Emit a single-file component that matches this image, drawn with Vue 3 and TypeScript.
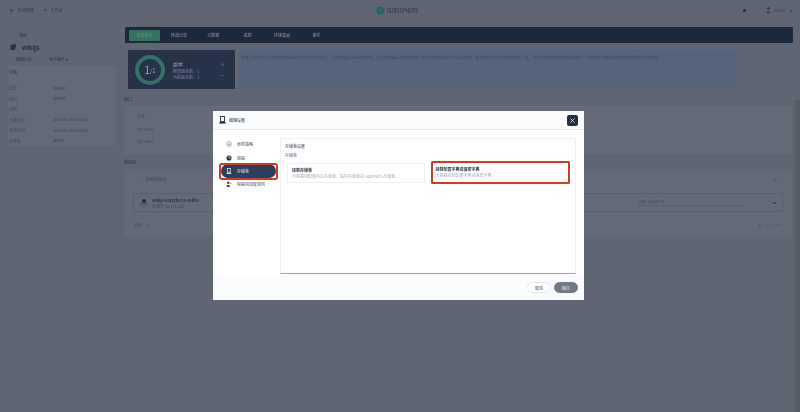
<script setup lang="ts">
const tabs: string[] = ['资源状态', '修改记录', '元数据', '监控', '环境变量', '事件']
const details: [string, string][] = [
  ['集群', 'default'],
  ['项目', 'default'],
  ['应用', '-'],
  ['创建时间', '2024-06-25 16:26:51'],
  ['更新时间', '2024-06-25 16:26:53'],
  ['创建者', 'admin'],
]
const navItems: { label: string; icon: string }[] = [
  { label: '更新策略', icon: 'update' },
  { label: '容器', icon: 'box' },
  { label: '存储卷', icon: 'disk' },
  { label: '容器组调度规则', icon: 'users' },
]
</script>

<template>
  <div class="page">
    <header class="topbar">
      <div class="top-left">
        <span class="top-link"><i class="ring"></i>平台管理</span>
        <span class="top-link second"><i class="dot"></i>工作台</span>
      </div>
      <div class="logo">
        <svg width="9" height="9" viewBox="0 0 12 12"><circle cx="6" cy="6" r="5.5" fill="#1a6b66" /><path d="M7.5 2.5 4.5 6l3 3.5" fill="none" stroke="#565c6a" stroke-width="1.6" /></svg>
        <span class="logo-word">KUBESPHERE</span>
      </div>
      <div class="top-right">
        <i class="bell"></i>
        <svg width="5" height="6" viewBox="0 0 5 6"><circle cx="2.5" cy="1.5" r="1.3" fill="#2d3648" /><path d="M.5 6c0-2 4-2 4 0z" fill="#2d3648" /></svg>
        <span class="admin">admin</span>
        <i class="caret"></i>
      </div>
    </header>

    <div class="main">
      <aside class="side">
        <div class="crumb">‹ <span>容器</span></div>
        <div class="name">
          <svg width="6" height="6" viewBox="0 0 8 8"><path d="M1 2h5v6H1zM2.500 .5H7.500V6" fill="#2a3346" stroke="#2a3346" stroke-width=".6" /></svg>
          <b>wikijs</b>
        </div>
        <div class="side-actions">
          <span>编辑信息</span>
          <span>更多操作 ▾</span>
        </div>
        <section class="detail-card">
          <div class="detail-title">详情</div>
          <div v-for="row in details" :key="row[0]" class="detail-row">
            <span class="detail-key">{{ row[0] }}</span>
            <span class="detail-val">{{ row[1] }}</span>
          </div>
        </section>
      </aside>

      <div class="content">
        <nav class="tabs">
          <span v-for="(tab, i) in tabs" :key="tab" class="tab" :class="{ active: i === 0 }">{{ tab }}</span>
        </nav>

        <div class="status-area">
          <div class="replica">
            <div class="gauge"><span class="big">1</span><span class="small">/1</span></div>
            <div class="replica-text">
              <div class="replica-title">副本</div>
              <div>期望副本数：1</div>
              <div>当前副本数：1</div>
            </div>
            <div class="stepper"><span>+</span><span>−</span></div>
          </div>
          <div class="info">
            容器 (Container) 通常用来描述应用运行的环境模型。主要用来描述无状态应用，副本的数量和容器组的定义都可以按需要进行扩容和缩容，确保所有的实例与期望状态一致。按照升级策略逐步更新容器组，并提供滚动更新和回滚机制保障服务可用性。
          </div>
        </div>

        <div class="section-label">端口</div>
        <section class="ports">
          <div class="port-row">名称</div>
          <div class="port-row">tcp-3000</div>
          <div class="port-row">tcp-3443</div>
        </section>

        <div class="section-label pods-label">容器组</div>
        <section class="pods">
          <div class="search"><span class="mag">⌕</span>搜索容器组<span class="refresh">↻</span></div>
          <div class="pod">
            <div class="pod-state"><i class="pod-dot"></i><span>运行中</span></div>
            <div class="pod-meta">
              <b>wikijs-55cccb574-85kh5</b>
              <span>创建于 10.1.0.130</span>
            </div>
            <div class="pod-usage">
              <span>内存 256.00 Mi</span>
              <i class="usage-bar"></i>
            </div>
            <span class="chev">⌄</span>
          </div>
          <div class="pager">
            <span>总数：1</span>
            <span class="pages">←&nbsp;&nbsp;&nbsp;1 / 1&nbsp;&nbsp;&nbsp;→</span>
          </div>
        </section>
      </div>
    </div>

    <i class="edge"></i>

    <div class="modal">
      <div class="modal-head">
        <svg width="7" height="8" viewBox="0 0 7 8"><rect x="1.500" y=".5" width="4" height="5" fill="none" stroke="#2a3346" stroke-width=".9" /><rect x=".5" y="6" width="6" height="1.600" fill="#2a3346" /></svg>
        <span>编辑设置</span>
        <button class="close" type="button" aria-label="关闭">
          <svg width="5" height="5" viewBox="0 0 5 5"><path d="m.5.5 4 4m0-4-4 4" stroke="#fff" stroke-width=".8" /></svg>
        </button>
      </div>
      <div class="modal-body">
        <ul class="modal-nav">
          <li v-for="item in navItems" :key="item.label" :class="{ selected: item.icon === 'disk' }">
            <svg width="6" height="6" viewBox="0 0 8 8">
              <template v-if="item.icon === 'update'"><circle cx="4" cy="4" r="3.200" fill="none" stroke="#5d6678" stroke-width=".7" /><path d="M2.500 5 4 2.500 5.500 5z" fill="#5d6678" /></template>
              <template v-else-if="item.icon === 'box'"><circle cx="4" cy="4" r="3.400" fill="#2a3346" /><path d="M4 1.500v2.500h2.500" stroke="#fff" stroke-width=".8" fill="none" /></template>
              <template v-else-if="item.icon === 'disk'"><rect x="2" y=".5" width="4" height="5" fill="none" stroke="#fff" stroke-width=".8" /><rect x="1" y="6.200" width="6" height="1.500" fill="#fff" /></template>
              <template v-else><circle cx="3" cy="2.200" r="1.600" fill="#2a3346" /><path d="M.5 7.500c0-3 5-3 5 0z" fill="#2a3346" /><circle cx="6.300" cy="3" r="1" fill="#7a8395" /></template>
            </svg>
            <span>{{ item.label }}</span>
          </li>
        </ul>
        <div class="panel">
          <div class="panel-title">存储卷设置</div>
          <div class="panel-sub">存储卷</div>
          <div class="options">
            <div class="option">
              <b>挂载存储卷</b>
              <span>为容器组配置持久存储卷，临时存储卷或 HostPath 存储卷。</span>
            </div>
            <div class="option picked">
              <b>挂载配置字典或保密字典</b>
              <span>为容器挂载配置字典或保密字典。</span>
            </div>
          </div>
        </div>
      </div>
      <div class="modal-foot">
        <button class="btn" type="button">取消</button>
        <button class="btn ok" type="button">确定</button>
      </div>
      <div class="callout"></div>
    </div>
  </div>
</template>

<style>
html, body { margin: 0; background: #5f6573; }
</style>

<style scoped>
* { box-sizing: border-box; }
.page {
  position: relative;
  width: 800px;
  height: 412px;
  overflow: hidden;
  background: #5f6573;
  font-family: "Noto Sans CJK SC", "Noto Sans", sans-serif;
  font-size: 4px;
  color: #323a48;
  filter: blur(.45px);
}
.topbar { height: 20px; display: flex; align-items: center; position: relative; padding: 0 8px; }
.top-left { display: flex; }
.top-link { display: flex; align-items: center; gap: 5px; color: #2e3644; margin-left: 1.500px; }
.second { margin-left: 10px; gap: 5px; }
.ring { width: 3px; height: 3px; border: .7px solid #2e3644; border-radius: 50%; }
.dot { width: 2px; height: 2px; background: #434b59; }
.logo { position: absolute; left: 376px; top: 4px; display: flex; align-items: center; gap: 2px; height: 12px; color: #2c3442; font-family: "Liberation Sans", sans-serif; }
.logo-word { font-size: 6.800px; transform: scaleX(.68); transform-origin: left center; white-space: nowrap; }
.top-right { margin-left: auto; display: flex; align-items: center; color: #414856; }
.bell { width: 3px; height: 3px; background: #1f2634; border-radius: 50%; margin-right: 20px; }
.admin { margin: 0 4px 0 3px; }
.caret { border: 1.500px solid transparent; border-top: 2px solid #2e3644; margin-top: 2px; }

.main { display: flex; padding: 0 4px 0 8px; gap: 8px; }
.side { width: 108px; flex: none; padding-top: 11px; }
.crumb { margin-left: 6px; height: 8px; line-height: 8px; color: #2e3644; }
.crumb span { margin-left: 3px; }
.name { display: flex; align-items: center; gap: 6px; height: 12px; margin-top: 2px; margin-left: 2px; font-family: "Liberation Sans", sans-serif; font-size: 6.500px; color: #232c3d; }
.side-actions { display: flex; gap: 17px; margin: 3px 0 0 8px; color: #2e3644; line-height: 7px; }
.detail-card { margin-top: 3px; height: 80px; background: #646a78; border-radius: 1px; padding: 3px 1px; }
.detail-title { color: #2a323f; line-height: 7px; margin-bottom: 7px; }
.detail-row { display: flex; height: 10.500px; align-items: center; }
.detail-key { width: 44px; color: #424957; }
.detail-val { color: #39414f; font-size: 3.800px; }

.content { flex: 1; min-width: 0; padding-top: 7px; }
.tabs { height: 16px; width: 668px; margin-left: 1px; background: #1c283d; border-radius: 1px; display: flex; align-items: center; padding-left: 4px; color: #959eac; }
.tab { width: 31px; height: 11px; line-height: 11px; text-align: center; margin-right: 3.400px; flex: none; }
.active { background: #36705f; color: #6b9889; border-radius: 1px; }
.status-area { display: flex; gap: 4px; padding: 7px 0 0 4px; width: 613px; }
.replica { width: 107px; height: 39px; flex: none; display: flex; align-items: center; background: #253248; color: #808a9b; padding-left: 7px; }
.gauge { width: 30px; height: 30px; border: 4.500px solid #367267; border-radius: 50%; display: flex; align-items: center; justify-content: center; color: #a0a8b5; }
.big { font-size: 10px; }
.small { font-size: 6px; margin-top: 2px; }
.replica-text { margin-left: 8px; line-height: 5.700px; margin-top: 1px; }
.replica-title { font-size: 5px; line-height: 7px; margin-bottom: 2px; color: #a3abb8; }
.stepper { margin-left: auto; margin-right: 10px; display: flex; flex-direction: column; gap: 1px; color: #646f81; font-size: 8px; line-height: 10px; }
.info { flex: 1; height: 39px; background: #54657a; color: #384c64; padding: 4.500px 2px; line-height: 5px; white-space: nowrap; overflow: hidden; font-size: 3.800px; }
.section-label { height: 7px; line-height: 7px; margin-top: 7px; color: #2a323f; }
.ports { height: 48px; background: #646a78; margin-top: 3px; width: 668px; padding: 4px 13px; color: #424957; }
.port-row { height: 12.500px; line-height: 12.500px; }
.pods-label { margin-top: 5px; }
.pods { height: 68px; background: #646a78; margin-top: 3px; width: 668px; padding: 2px 9px; color: #424957; }
.search { display: flex; align-items: center; height: 16px; padding-left: 5px; }
.mag { margin-right: 6px; }
.refresh { margin-left: auto; margin-right: 6px; }
.pod { display: flex; align-items: center; height: 19px; margin-top: 6px; border: .6px solid #5a606e; }
.pod-state { display: flex; flex-direction: column; align-items: center; width: 12px; margin-left: 4px; font-size: 3px; line-height: 3px; }
.pod-dot { width: 4px; height: 4px; background: #1f2634; border-radius: 50%; margin-bottom: 1px; }
.pod-meta { display: flex; flex-direction: column; margin-left: 2px; line-height: 6px; }
.pod-meta b { color: #2a323f; }
.pod-usage { margin-left: auto; margin-right: 26px; width: 106px; line-height: 5px; font-size: 3.800px; margin-top: -1px; }
.usage-bar { display: block; height: 1px; background: #48686a; margin-top: 1px; }
.chev { margin-right: 4px; font-size: 8px; line-height: 8px; color: #1f2634; margin-top: -3px; }
.pager { display: flex; justify-content: space-between; margin-top: 10px; padding: 0 3px 0 1px; }

.edge { position: absolute; left: 795px; top: 100px; width: 5px; height: 312px; background: #545a66; }

.modal { position: absolute; left: 213px; top: 111px; width: 371px; height: 189px; background: #fff; border-radius: 2px; display: flex; flex-direction: column; }
.modal-head { height: 19px; background: #f9fbfd; border-bottom: .6px solid #e3e9ef; display: flex; align-items: center; gap: 3px; padding: 0 6px; color: #242e42; }
.close { margin-left: auto; width: 11px; height: 11px; padding: 0; border: 0; border-radius: 2px; background: #242e42; display: flex; align-items: center; justify-content: center; }
.modal-body { flex: 1; display: flex; min-height: 0; }
.modal-nav { width: 67px; margin: 0; padding: 7.500px 0 0 6px; list-style: none; color: #4a5262; }
.modal-nav li { display: flex; align-items: center; gap: 5px; height: 13.400px; padding-left: 7px; white-space: nowrap; }
.modal-nav .selected { width: 55px; background: #2f3e5c; color: #e4e8ee; border-radius: 7px; margin-left: 2px; padding-left: 5px; }
.panel { width: 296px; margin-top: 8px; height: 136px; border: .6px solid #eef2f5; border-bottom: 1px solid #98a0ad; padding: 4px 4px; }
.panel-title { color: #343c4b; line-height: 6px; }
.panel-sub { color: #5b6373; line-height: 6px; margin-top: 3px; }
.options { display: flex; align-items: flex-start; gap: 5.500px; margin: 5px 0 0 2px; }
.option { width: 138px; height: 20px; border: .6px solid #eef2f5; padding: 3px 4px; display: flex; flex-direction: column; line-height: 6px; color: #a3abb7; white-space: nowrap; overflow: hidden; flex: none; }
.option b { color: #2f3745; }
.picked { border: 2px solid #c63f2b; border-radius: 1.500px; width: 139px; height: 23px; margin-top: -2.500px; padding: 3px 3px; }
.modal-foot { height: 25px; background: #f9fbfd; display: flex; align-items: center; justify-content: flex-end; gap: 3px; padding: 0 6px; }
.btn { font: inherit; font-size: 4px; width: 24px; height: 11px; padding: 0; border: .6px solid #e5e9ee; border-radius: 6px; background: #fff; color: #343c4b; }
.ok { background: #717787; border-color: #717787; color: #e4e8ee; }
.callout { position: absolute; left: 5.500px; top: 51.500px; width: 59px; height: 17.500px; border: 2px solid #c63f2b; border-radius: 3px; pointer-events: none; }
</style>
